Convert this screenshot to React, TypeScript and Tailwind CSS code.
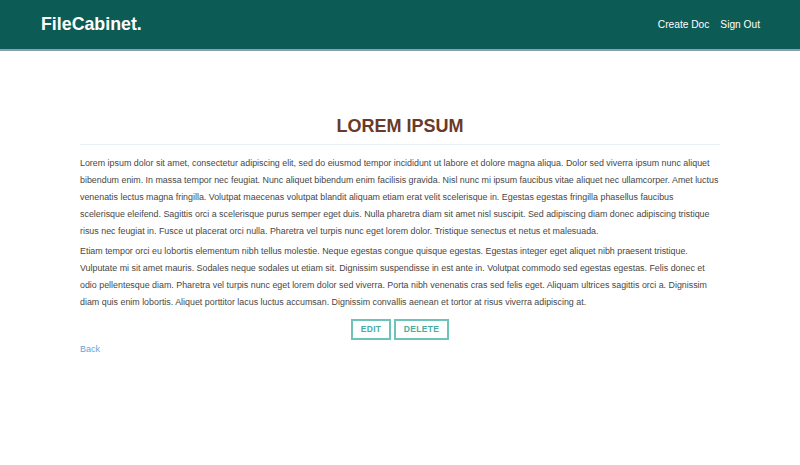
import React from "react";

const p1 =
  "Lorem ipsum dolor sit amet, consectetur adipiscing elit, sed do eiusmod tempor incididunt ut labore et dolore magna aliqua. Dolor sed viverra ipsum nunc aliquet bibendum enim. In massa tempor nec feugiat. Nunc aliquet bibendum enim facilisis gravida. Nisl nunc mi ipsum faucibus vitae aliquet nec ullamcorper. Amet luctus venenatis lectus magna fringilla. Volutpat maecenas volutpat blandit aliquam etiam erat velit scelerisque in. Egestas egestas fringilla phasellus faucibus scelerisque eleifend. Sagittis orci a scelerisque purus semper eget duis. Nulla pharetra diam sit amet nisl suscipit. Sed adipiscing diam donec adipiscing tristique risus nec feugiat in. Fusce ut placerat orci nulla. Pharetra vel turpis nunc eget lorem dolor. Tristique senectus et netus et malesuada.";

const p2 =
  "Etiam tempor orci eu lobortis elementum nibh tellus molestie. Neque egestas congue quisque egestas. Egestas integer eget aliquet nibh praesent tristique. Vulputate mi sit amet mauris. Sodales neque sodales ut etiam sit. Dignissim suspendisse in est ante in. Volutpat commodo sed egestas egestas. Felis donec et odio pellentesque diam. Pharetra vel turpis nunc eget lorem dolor sed viverra. Porta nibh venenatis cras sed felis eget. Aliquam ultrices sagittis orci a. Dignissim diam quis enim lobortis. Aliquet porttitor lacus luctus accumsan. Dignissim convallis aenean et tortor at risus viverra adipiscing at.";

export default function App() {
  return (
    <div
      className="min-h-[465px] bg-white"
      style={{ fontFamily: '"Liberation Sans", Arial, sans-serif' }}
    >
      <header className="h-[51px] bg-[#0c5c55] border-b-2 border-[#8e9fb3] flex items-center justify-between px-10">
        <div className="text-white font-bold text-[17.8px] ml-px">
          FileCabinet.
        </div>
        <nav className="flex items-center gap-[11px] text-white text-[10.2px]">
          <a>Create Doc</a>
          <a>Sign Out</a>
        </nav>
      </header>
      <main className="w-[640px] mx-auto pt-[64px]">
        <h1 className="text-center font-bold text-[18px] leading-[22px] text-[#6b3a27] pb-[7px] border-b border-[#e6f0f5]">
          LOREM IPSUM
        </h1>
        <div className="text-[8.9px] leading-[17px] text-[#474747] mt-[10px]">
          <p className="mb-[3px]">{p1}</p>
          <p>{p2}</p>
        </div>
        <div className="flex justify-center gap-[3px] mt-[8px]">
          <button className="h-[21px] w-[40px] border-2 border-[#6cc4b8] text-[#45ad9f] font-bold text-[8.5px] tracking-[0.3px]">
            EDIT
          </button>
          <button className="h-[21px] w-[55px] border-2 border-[#6cc4b8] text-[#45ad9f] font-bold text-[8.5px] tracking-[0.3px]">
            DELETE
          </button>
        </div>
        <a className="block mt-[3px] text-[9px] text-[#6aa4d8]">Back</a>
      </main>
    </div>
  );
}
